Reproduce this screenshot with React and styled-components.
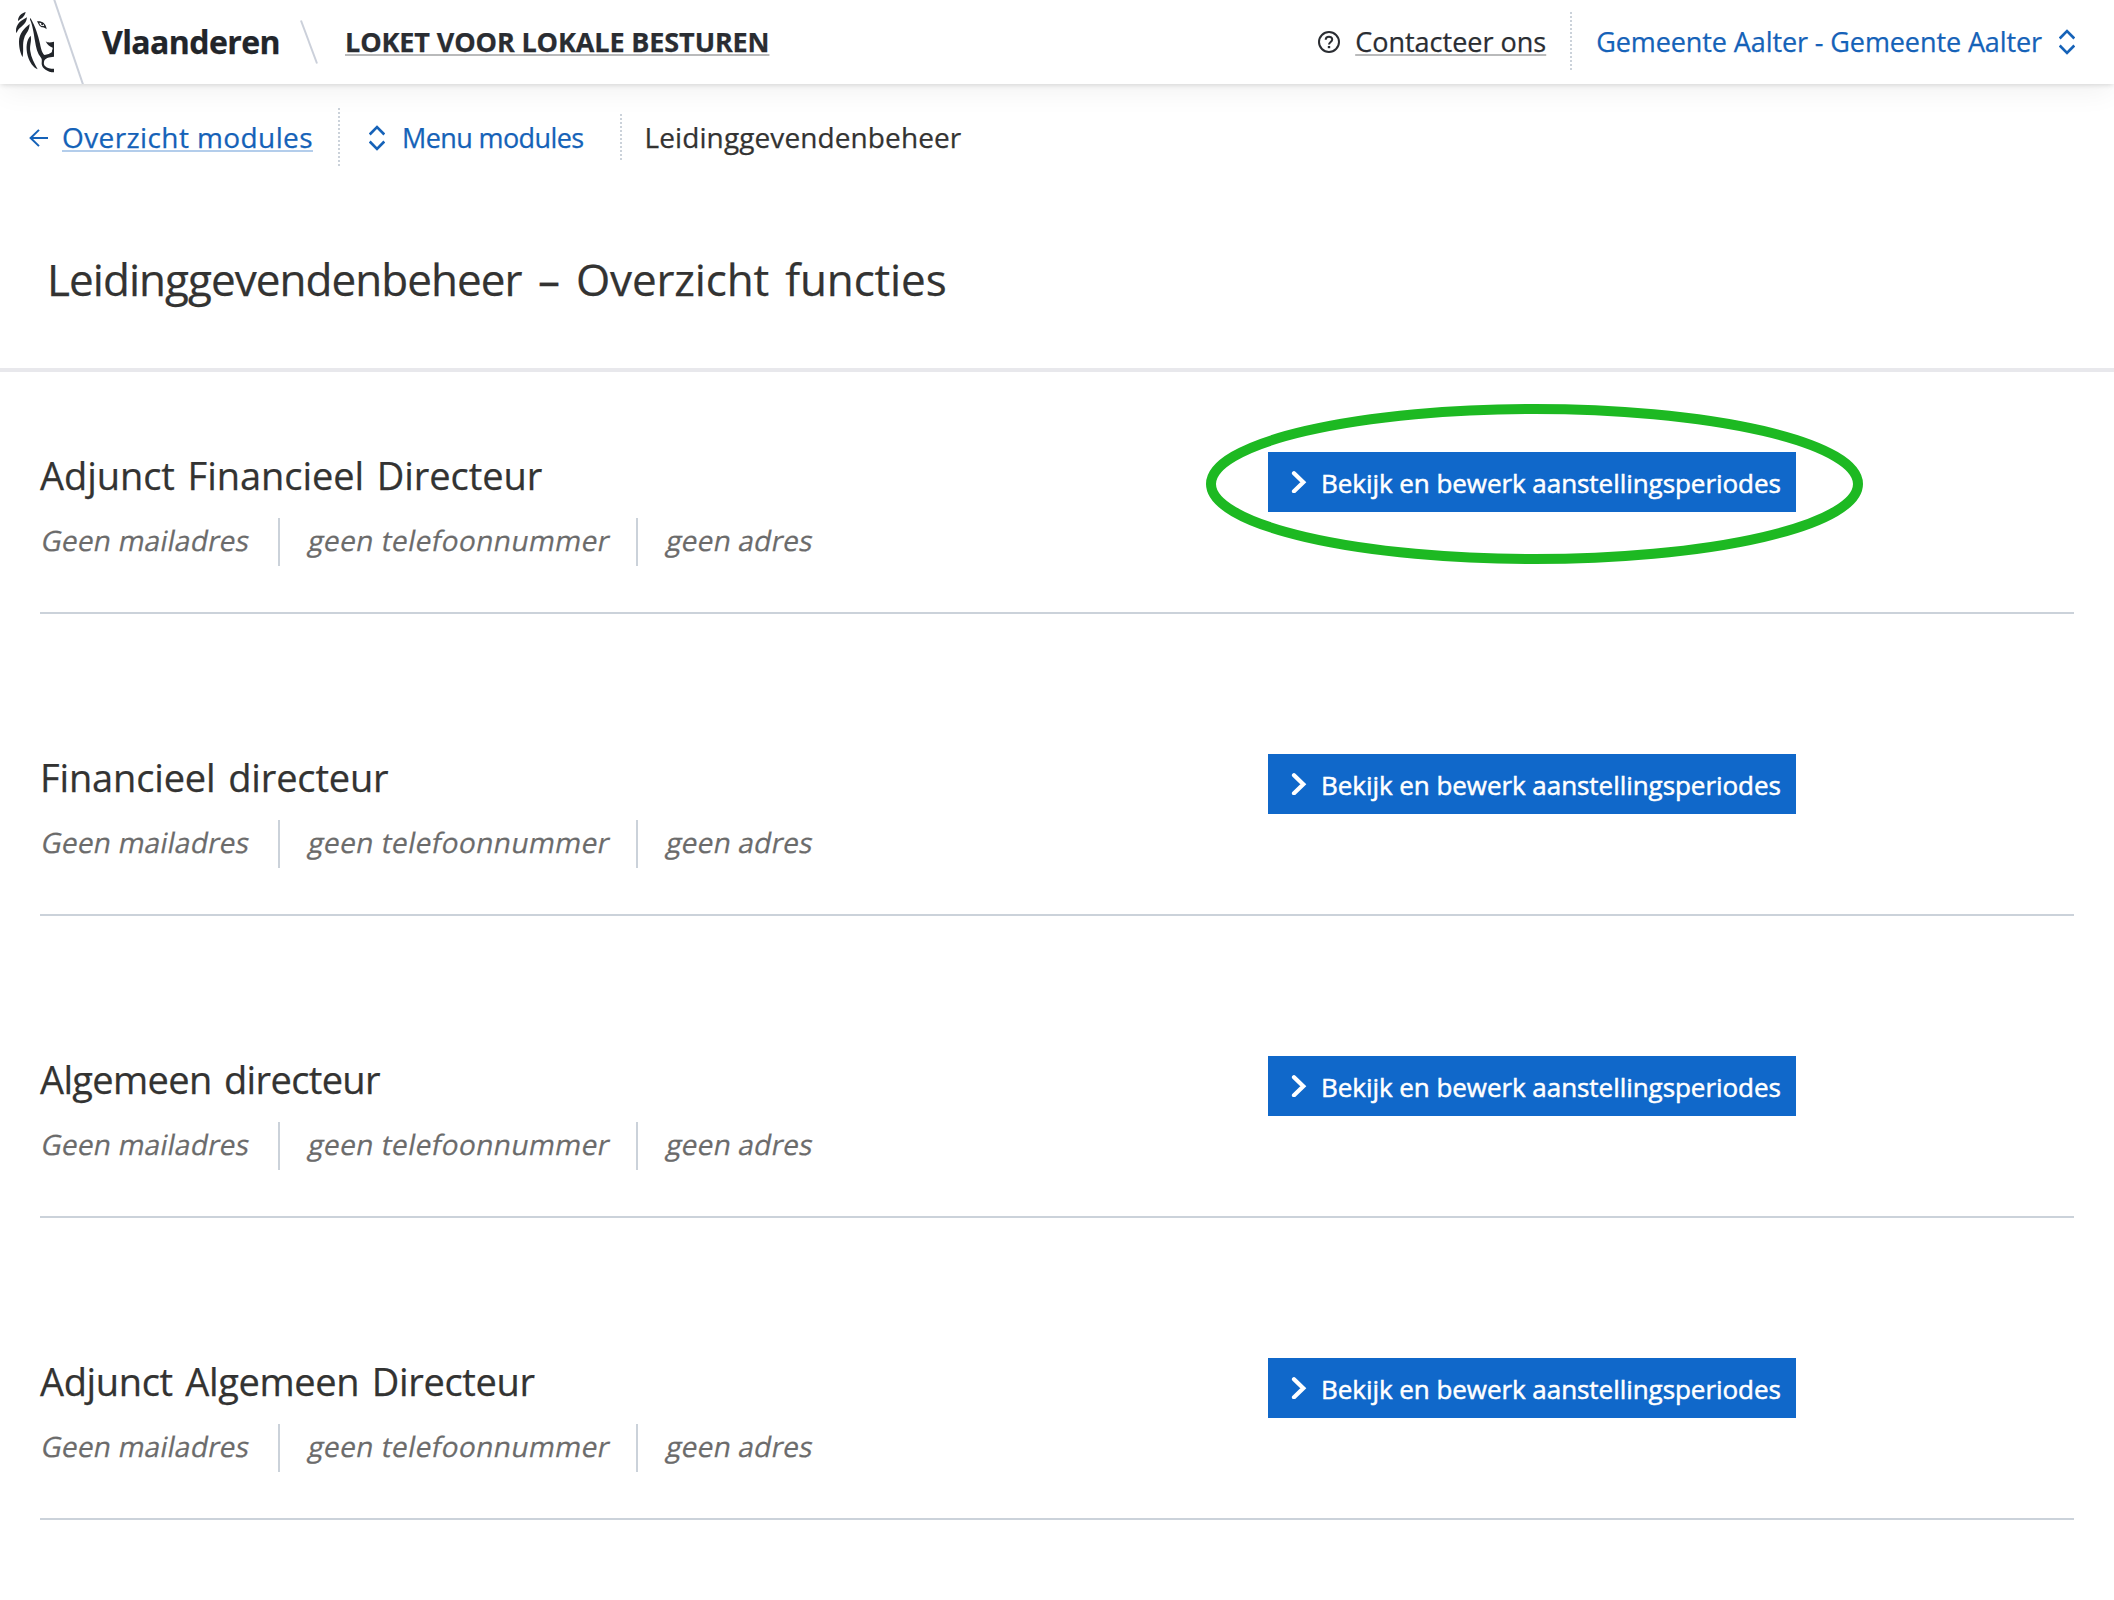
import React from "react";
import styled, { createGlobalStyle } from "styled-components";

const Global = createGlobalStyle`
  *, *::before, *::after { box-sizing: border-box; }
  body {
    margin: 0;
    background: #fff;
    color: #333332;
    font-family: "Open Sans", "Noto Sans", sans-serif;
    font-size: 28px;
    -webkit-text-stroke: 0.25px currentColor;
  }
  h1, h2, p { margin: 0; font-weight: 400; }
  svg { display: block; flex: none; }
`;

const Page = styled.div`
  width: 2114px;
  height: 1600px;
  overflow: hidden;
`;

const Header = styled.header`
  position: relative;
  z-index: 1;
  display: flex;
  align-items: center;
  height: 84px;
  padding-right: 39px;
  background: #fff;
  box-shadow: 0 2px 5px -1px rgba(0, 0, 0, 0.14), 0 10px 28px -2px rgba(0, 0, 0, 0.055);
`;

const Label = styled.span`
  white-space: nowrap;
  line-height: 40px;
  padding-bottom: 1px;
  font-size: ${(p) => p.$size || 28}px;
  font-weight: ${(p) => p.$weight || 400};
  letter-spacing: ${(p) => p.$spacing || 0}px;
  color: ${(p) => p.$color || "#333332"};
`;

const Brand = styled(Label)`
  width: 198px;
  margin-left: 18px;
`;

const Link = styled(Label).attrs({ as: "a", href: "#" })`
  text-decoration: underline;
  text-decoration-color: ${(p) => p.$line};
  text-decoration-thickness: 2px;
  text-underline-offset: 2px;
  text-decoration-skip-ink: none;
`;

const HomeLink = styled(Link)`
  margin-left: 27px;
`;

const HeaderActions = styled.div`
  display: flex;
  align-items: center;
  margin-left: auto;
`;

const ContactLink = styled(Link)`
  margin-left: 15px;
`;

const Dots = styled.i`
  flex: none;
  width: 2px;
  height: ${(p) => p.$height}px;
  margin: 0 ${(p) => p.$right}px 0 ${(p) => p.$left}px;
  background: repeating-linear-gradient(to bottom, #cbd2da 0 2px, transparent 2px 4px);
`;

const SwitchButton = styled.button`
  display: flex;
  align-items: center;
  gap: 17px;
  padding: 0;
  border: 0;
  background: none;
  font-family: inherit;
`;

const Breadcrumbs = styled.nav`
  display: flex;
  align-items: center;
  height: 108px;
  padding-left: 29px;
`;

const BackLink = styled(Link)`
  margin-left: 14px;
  padding-bottom: 2px;
`;

const Crumb = styled(Label)`
  padding-bottom: ${(p) => (p.$size ? 0 : 2)}px;
`;

const TitleBar = styled.section`
  display: flex;
  align-items: center;
  height: 180px;
  padding: 0 48px 2px 47px;
  border-bottom: 4px solid #e8e8ec;
`;

const Title = styled.h1`
  font-size: 44px;
  line-height: 60px;
  letter-spacing: -0.15px;
  word-spacing: 5px;
`;

const TitleModule = styled.span`
  letter-spacing: -0.95px;
`;

const List = styled.main`
  display: flex;
  flex-direction: column;
  gap: 108px;
  padding: 48px 40px 0;
`;

const Item = styled.article`
  display: grid;
  grid-template-columns: 1228px auto;
  justify-content: start;
  align-items: start;
  height: 194px;
  border-bottom: 2px solid #cbd2da;
`;

const Info = styled.div`
  padding-top: 27px;
`;

const Role = styled.h2`
  font-size: 38px;
  line-height: 56px;
  letter-spacing: ${(p) => p.$spacing}px;
  word-spacing: 3px;
`;

const Meta = styled.div`
  display: flex;
  align-items: center;
  height: 48px;
  margin-top: 15px;
`;

const MetaCell = styled.div`
  width: ${(p) => p.$width}px;
  height: 48px;
  padding-left: ${(p) => p.$pad}px;
  border-left: ${(p) => (p.$divided ? "2px solid #cbd2da" : "0")};
`;

const MetaText = styled.span`
  display: inline-block;
  transform: skewX(-11deg);
  font-size: 28px;
  line-height: 45px;
  letter-spacing: ${(p) => p.$spacing}px;
  white-space: nowrap;
  color: #6b6b6b;
`;

const Action = styled.div`
  position: relative;
  margin-top: 32px;
`;

const ActionButton = styled.button`
  display: flex;
  align-items: center;
  gap: 14px;
  width: 528px;
  height: 60px;
  padding: 0 0 0 23px;
  border: 0;
  background: #1068ca;
  color: #fff;
  font: 500 26px/58px "Open Sans", "Noto Sans", sans-serif;
  letter-spacing: -0.05px;
  -webkit-text-stroke: 0.5px #fff;
  white-space: nowrap;
`;

const ActionText = styled.span`
  padding-top: 2px;
`;

const Highlight = styled.svg`
  position: absolute;
  left: -62px;
  top: -48px;
  pointer-events: none;
`;

const Logo = () => (
  <svg width="84" height="84" viewBox="0 0 84 84" fill="#22252a">
    <g transform="translate(10 5) scale(0.3333)">
      <path d="M47 21C35 24 24 33 24 48C32 41 44 37 47 21Z" />
      <path d="M51 37C34 46 17 57 18 79C19 85 20 85 22 79C28 66 49 61 51 37Z" />
      <path d="M59 57C42 70 27 86 27 110C27 130 33 150 38 156C42 132 36 116 43 98C47 84 58 80 59 57Z" />
      <path d="M62 92C49 105 47 128 53 152C59 173 70 187 83 193C73 174 63 158 61 139C58 120 66 109 62 92Z" />
      <path d="M61 38C77 66 84 90 90 116C93 132 97 146 104 150C112 148 121 146 126 141C124 136 129 133 128 128C120 125 112 120 107 109C113 114 122 113 132 110V155C117 156 104 160 102 170C101 176 102 180 105 183C112 191 121 191 132 191V202C113 202 96 190 95 177C95 168 97 163 93 158C82 145 78 128 75 108C71 83 67 57 60 44Z" />
      <path fillRule="evenodd" d="M81 49C93 47 108 52 110 73C106 70 103 67 98 67C90 67 87 60 81 49ZM88 53C89 60 94 64 101 63C105 60 101 54 88 53Z" />
      <circle cx="97" cy="57" r="3.5" />
    </g>
    <path d="M54 -1L83 84.5" stroke="#cbd0da" strokeWidth="2" fill="none" />
  </svg>
);

const Slash = () => (
  <svg width="18" height="44" viewBox="0 0 18 44">
    <path d="M1 0.5L17 43.5" stroke="#cbd0da" strokeWidth="2" />
  </svg>
);

const UpDown = () => (
  <svg width="16" height="26" viewBox="0 0 16 26" fill="none" stroke="#1562b8" strokeWidth="2.6">
    <path d="M0.7 9.5L8 2.2L15.3 9.5M0.7 16.5L8 23.8L15.3 16.5" />
  </svg>
);

const Help = () => (
  <svg width="22" height="22" viewBox="0 0 22 22" fill="none" stroke="#2a2d32" strokeWidth="2">
    <circle cx="11" cy="11" r="10" />
    <path d="M7.7 8.7C7.7 4.7 14.2 4.7 14.2 8.5C14.2 10.9 11 11 11 13.6" />
    <path d="M11 15V17.2" strokeWidth="2.4" />
  </svg>
);

const ArrowLeft = () => (
  <svg width="19" height="18" viewBox="0 0 19 18" fill="none" stroke="#1562b8" strokeWidth="2">
    <path d="M19 9H1.8M10 0.9L1.6 9L10 17.1" />
  </svg>
);

const Chevron = () => (
  <svg width="16" height="22" viewBox="0 0 16 22" fill="none" stroke="#fff" strokeWidth="4.2" strokeLinecap="round">
    <path d="M3 2.3L12.3 11.3L3 20.3" />
  </svg>
);

const roles = [
  { name: "Adjunct Financieel Directeur", spacing: -0.06 },
  { name: "Financieel directeur", spacing: -0.15 },
  { name: "Algemeen directeur", spacing: -0.63 },
  { name: "Adjunct Algemeen Directeur", spacing: -0.35 },
];

const RoleItem = ({ name, spacing, highlighted }) => (
  <Item>
    <Info>
      <Role $spacing={spacing}>{name}</Role>
      <Meta>
        <MetaCell $width={238} $pad={2}>
          <MetaText $spacing={0.2}>Geen mailadres</MetaText>
        </MetaCell>
        <MetaCell $width={358} $pad={29} $divided>
          <MetaText $spacing={0.42}>geen telefoonnummer</MetaText>
        </MetaCell>
        <MetaCell $width={200} $pad={29} $divided>
          <MetaText $spacing={0.2}>geen adres</MetaText>
        </MetaCell>
      </Meta>
    </Info>
    <Action>
      <ActionButton>
        <Chevron />
        <ActionText>Bekijk en bewerk aanstellingsperiodes</ActionText>
      </ActionButton>
      {highlighted && (
        <Highlight width="657" height="160" viewBox="0 0 657 160">
          <ellipse cx="328.5" cy="80" rx="323.5" ry="75" fill="none" stroke="#1db922" strokeWidth="10" />
        </Highlight>
      )}
    </Action>
  </Item>
);

export default function App() {
  return (
    <Page>
      <Global />
      <Header>
        <Logo />
        <Brand $size={32} $weight={700} $spacing={-0.6} $color="#22252a">Vlaanderen</Brand>
        <Slash />
        <HomeLink $size={27} $weight={700} $spacing={-0.12} $color="#2a2d32" $line="#b9babb">
          LOKET VOOR LOKALE BESTUREN
        </HomeLink>
        <HeaderActions>
          <Help />
          <ContactLink $size={27} $color="#2a2d32" $line="#b9babb">Contacteer ons</ContactLink>
          <Dots $height={60} $left={24} $right={24} />
          <SwitchButton>
            <Label $size={27} $spacing={-0.1} $color="#1562b8">Gemeente Aalter - Gemeente Aalter</Label>
            <UpDown />
          </SwitchButton>
        </HeaderActions>
      </Header>
      <Breadcrumbs>
        <ArrowLeft />
        <BackLink $spacing={0.4} $color="#1562b8" $line="#b3cdeb">Overzicht modules</BackLink>
        <Dots $height={60} $left={25} $right={29} />
        <SwitchButton>
          <UpDown />
          <Crumb $size={27} $spacing={-0.6} $color="#1562b8">Menu modules</Crumb>
        </SwitchButton>
        <Dots $height={48} $left={36} $right={23} />
        <Crumb $spacing={0.1}>Leidinggevendenbeheer</Crumb>
      </Breadcrumbs>
      <TitleBar>
        <Title>
          <TitleModule>Leidinggevendenbeheer</TitleModule> – Overzicht functies
        </Title>
      </TitleBar>
      <List>
        {roles.map((role, i) => (
          <RoleItem key={role.name} name={role.name} spacing={role.spacing} highlighted={i === 0} />
        ))}
      </List>
    </Page>
  );
}
